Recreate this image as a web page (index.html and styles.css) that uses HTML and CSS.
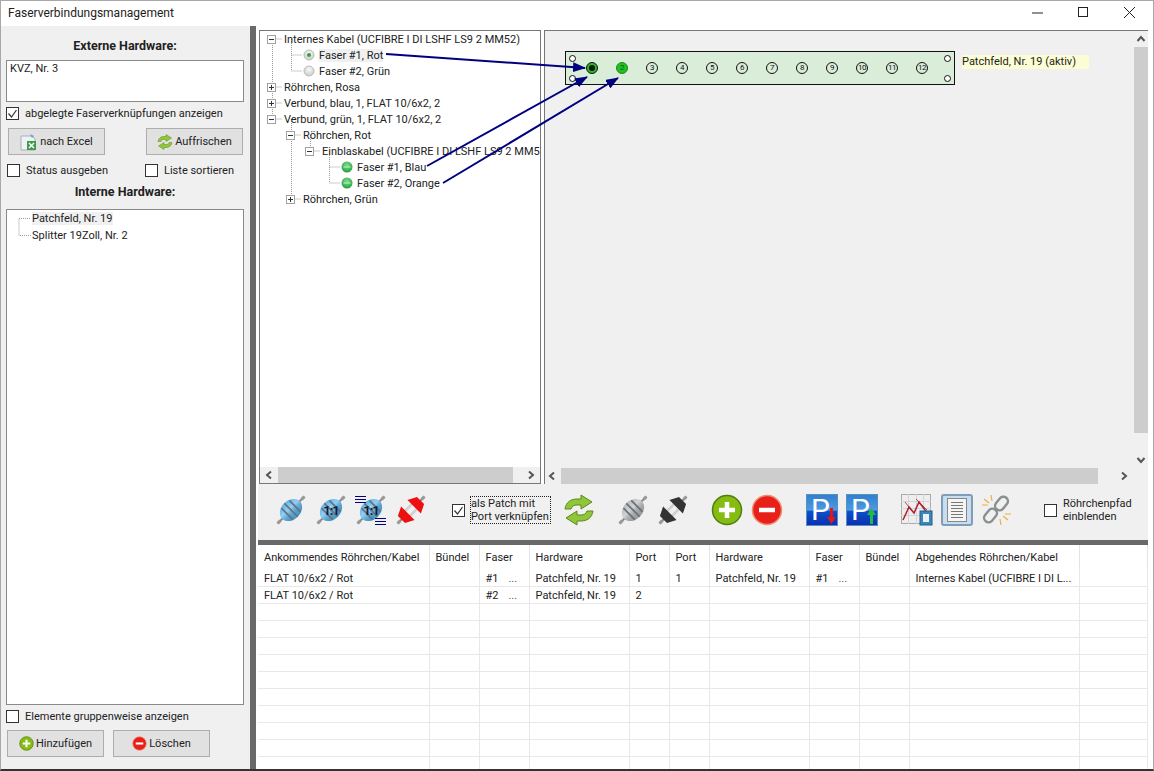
FILE: index.html
```html
<!DOCTYPE html>
<!-- Faserverbindungsmanagement window: hardware list on the left, fibre tree and patch panel on the right, connection table below -->
<html lang="de">
  <head>
    <meta charset="utf-8" />
    <title>Faserverbindungsmanagement</title>
    <link rel="stylesheet" href="styles.css">
  </head>
  <body>
    <svg class="defs" width="0" height="0">
      <defs>
        <linearGradient id="shine" x1="0" y1="0" x2="1" y2="0">
          <stop offset="0" stop-color="#fff" stop-opacity=".1" />
          <stop offset=".4" stop-color="#fff" stop-opacity=".4" />
          <stop offset="1" stop-color="#000" stop-opacity=".12" />
        </linearGradient>
        <linearGradient id="pblue" x1="0" y1="0" x2="0" y2="1">
          <stop offset="0" stop-color="#2f7fd0" />
          <stop offset=".5" stop-color="#4f9ae0" />
          <stop offset=".55" stop-color="#0d4fc8" />
          <stop offset="1" stop-color="#0a2fb0" />
        </linearGradient>
        <radialGradient id="ledgreen" cx=".5" cy=".35" r=".7">
          <stop offset="0" stop-color="#7fdc8c" />
          <stop offset="1" stop-color="#1f9a3a" />
        </radialGradient>
        <radialGradient id="ledgrey" cx=".5" cy=".35" r=".7">
          <stop offset="0" stop-color="#fafafa" />
          <stop offset="1" stop-color="#c4c8c4" />
        </radialGradient>
        <symbol id="chevron-left" viewBox="0 0 10 10"><path d="M7 1.500L3 5l4 3.500" fill="none" stroke="#555" stroke-width="2" /></symbol>
        <symbol id="chevron-right" viewBox="0 0 10 10"><path d="M3 1.500L7 5l-4 3.500" fill="none" stroke="#555" stroke-width="2" /></symbol>
        <symbol id="chevron-up" viewBox="0 0 10 10"><path d="M1.500 7L5 3l3.500 4" fill="none" stroke="#555" stroke-width="2" /></symbol>
        <symbol id="chevron-down" viewBox="0 0 10 10"><path d="M1.500 3L5 7l3.500-4" fill="none" stroke="#555" stroke-width="2" /></symbol>
        <symbol id="tick" viewBox="0 0 13 13"><path d="M2.500 6.500l3 3.500 5-7" fill="none" stroke="#333" stroke-width="1.200" /></symbol>
        <symbol id="plug" viewBox="0 0 32 32">
          <g transform="rotate(45 16 16)">
            <path d="M16-3V35" stroke="#8a8a8a" stroke-width="2" />
            <path d="M14.500-3h3v4h-3zM14.500 31h3v4h-3z" fill="#999" />
            <path d="M6.500 15C6.500 9 11 3.500 16 3.500S25.500 9 25.500 15z" fill="currentColor" />
            <path d="M6.500 17C6.500 23 11 28.500 16 28.500S25.500 23 25.500 17z" fill="currentColor" />
            <path d="M6.500 15h19v2h-19z" fill="currentColor" />
            <ellipse cx="16" cy="16" rx="9.500" ry="12.500" fill="url(#shine)" />
            <path d="M8 10.500h16M6.500 16h19M8 21.500h16" stroke="#66727e" stroke-width="1.800" />
          </g>
        </symbol>
        <symbol id="plug-open" viewBox="0 0 32 32">
          <g transform="rotate(45 16 16)">
            <path d="M16-3V6M16 26V35" stroke="#8a8a8a" stroke-width="2" />
            <path d="M14.500-3h3v4h-3zM14.500 31h3v4h-3z" fill="#999" />
            <path d="M12.500 11V22M19.500 11V22" stroke="#d0d0d0" stroke-width="2.600" />
            <path d="M6.500 11.500L11 2.500h10l4.500 9z" fill="currentColor" />
            <path d="M6.500 20.500L11 29.500h10l4.500-9z" fill="currentColor" />
          </g>
        </symbol>
        <symbol id="refresh" viewBox="0 0 32 32">
          <path d="M2 15C3 8 8 5 14 5h4V1l11 7-11 7v-4h-4c-3 0-5 1-6 4z" fill="#8fc63a" stroke="#5c8a18" />
          <path d="M30 17C29 24 24 27 18 27h-4v4L3 24l11-7v4h4c3 0 5-1 6-4z" fill="#8fc63a" stroke="#5c8a18" />
        </symbol>
        <symbol id="add" viewBox="0 0 32 32">
          <circle cx="16" cy="16" r="14.500" fill="#86bc12" stroke="#4f7d10" stroke-width="1.500" />
          <path d="M16 8v16M8 16h16" stroke="#fff" stroke-width="4.500" />
        </symbol>
        <symbol id="remove" viewBox="0 0 32 32">
          <circle cx="16" cy="16" r="14.500" fill="#e8201a" stroke="#f08a70" stroke-width="1.500" />
          <path d="M8 16h16" stroke="#fff" stroke-width="4.500" />
        </symbol>
      </defs>
    </svg>

    <div class="window">
      <div class="titlebar">
        <span class="title">Faserverbindungsmanagement</span>
        <div class="caption-buttons">
          <svg width="46" height="24" viewBox="0 0 46 24"><path d="M18 12h11" stroke="#222" /></svg>
          <svg width="46" height="24" viewBox="0 0 46 24"><rect x="18.500" y="6.500" width="9" height="9" fill="none" stroke="#222" /></svg>
          <svg width="46" height="24" viewBox="0 0 46 24"><path d="M18 6l11 11M29 6L18 17" stroke="#222" fill="none" /></svg>
        </div>
      </div>

      <div class="content">
        <aside class="sidebar">
          <div class="heading">Externe Hardware:</div>
          <div class="box box-external">KVZ, Nr. 3</div>
          <label class="check check-first"><span class="tickbox"><svg width="13" height="13"><use href="#tick" /></svg></span>abgelegte Faserverknüpfungen anzeigen</label>
          <div class="button-row">
            <button class="btn">
              <svg width="18" height="18" viewBox="0 0 18 18">
                <path d="M1 3h11l3 3v11H1z" fill="#eef2f4" stroke="#a8b0b8" />
                <path d="M7 8h9v9H7z" fill="#3f9a4a" />
                <path d="M9 10l5 5M14 10l-5 5" stroke="#fff" stroke-width="1.500" />
                <path d="M10 1l4 2-2 2z" fill="#6a9ad0" />
              </svg>nach Excel
            </button>
            <button class="btn">
              <svg width="16" height="16"><use href="#refresh" /></svg>Auffrischen
            </button>
          </div>
          <div class="check-row">
            <label class="check"><span class="tickbox"></span>Status ausgeben</label>
            <label class="check"><span class="tickbox"></span>Liste sortieren</label>
          </div>
          <div class="heading heading-internal">Interne Hardware:</div>
          <div class="box box-internal">
            <svg class="dots" width="14" height="30" viewBox="0 0 14 30"><path d="M1 8.500h12M1 8.500V25.500h12" fill="none" stroke="#999" stroke-dasharray="1 1" /></svg>
            <div class="hw-item"><span class="selected">Patchfeld, Nr. 19</span></div>
            <div class="hw-item">Splitter 19Zoll, Nr. 2</div>
          </div>
          <label class="check check-group"><span class="tickbox"></span>Elemente gruppenweise anzeigen</label>
          <div class="button-row button-row-bottom">
            <button class="btn"><svg width="15" height="15"><use href="#add" /></svg>Hinzufügen</button>
            <button class="btn"><svg width="15" height="15"><use href="#remove" /></svg>Löschen</button>
          </div>
        </aside>

        <div class="vsplit"></div>

        <main class="main">
          <div class="upper">
            <div class="tree">
              <div class="tree-rows">
                <svg class="tree-lines" width="280" height="180" viewBox="260 31 280 180">
                  <g fill="none" stroke="#999" stroke-dasharray="1 1">
                    <path d="M272.500 39V119M272.500 39H282M272.500 87H282M272.500 103H282M272.500 119H282" />
                    <path d="M291.500 39V71M291.500 55H302M291.500 71H302" />
                    <path d="M291.500 119V199M291.500 135H301M291.500 199H301" />
                    <path d="M310.500 135V151M310.500 151H320" />
                    <path d="M329.500 151V183M329.500 167H340M329.500 183H340" />
                  </g>
                </svg>
                <div class="node lvl0"><span class="toggle toggle-open"></span>Internes Kabel (UCFIBRE I DI LSHF LS9 2 MM52)</div>
                <div class="node lvl1-leaf"><svg class="led" width="12" height="12"><circle cx="6" cy="6" r="5" fill="url(#ledgrey)" stroke="#b0c0b0" /><circle cx="6" cy="6" r="2" fill="#3a9a4a" /></svg><span class="selected">Faser #1, Rot</span></div>
                <div class="node lvl1-leaf"><svg class="led" width="12" height="12"><circle cx="6" cy="6" r="5" fill="url(#ledgrey)" stroke="#bbb" /></svg>Faser #2, Grün</div>
                <div class="node lvl0"><span class="toggle toggle-closed"></span>Röhrchen, Rosa</div>
                <div class="node lvl0"><span class="toggle toggle-closed"></span>Verbund, blau, 1, FLAT 10/6x2, 2</div>
                <div class="node lvl0"><span class="toggle toggle-open"></span>Verbund, grün, 1, FLAT 10/6x2, 2</div>
                <div class="node lvl1"><span class="toggle toggle-open"></span>Röhrchen, Rot</div>
                <div class="node lvl2"><span class="toggle toggle-open"></span>Einblaskabel (UCFIBRE I DI LSHF LS9 2 MM52)</div>
                <div class="node lvl3-leaf"><svg class="led" width="12" height="12"><circle cx="6" cy="6" r="5.500" fill="url(#ledgreen)" /><path d="M2.500 6h7" stroke="#c8f0c8" /></svg>Faser #1, Blau</div>
                <div class="node lvl3-leaf"><svg class="led" width="12" height="12"><circle cx="6" cy="6" r="5.500" fill="url(#ledgreen)" /><path d="M2.500 6h7" stroke="#c8f0c8" /></svg>Faser #2, Orange</div>
                <div class="node lvl1"><span class="toggle toggle-closed"></span>Röhrchen, Grün</div>
              </div>
              <div class="hscroll">
                <svg class="arrow" width="10" height="10"><use href="#chevron-left" /></svg>
                <div class="track"><div class="thumb thumb-tree"></div></div>
                <svg class="arrow" width="10" height="10"><use href="#chevron-right" /></svg>
              </div>
            </div>

            <div class="canvas">
              <div class="canvas-view">
                <div class="canvas-stage">
                  <div class="patchfeld">
                    <div class="holes"><i></i><i></i></div>
                    <div class="ports">
                      <span class="port port-active"><b></b></span>
                      <span class="port port-used">2</span>
                      <span class="port">3</span>
                      <span class="port">4</span>
                      <span class="port">5</span>
                      <span class="port">6</span>
                      <span class="port">7</span>
                      <span class="port">8</span>
                      <span class="port">9</span>
                      <span class="port">10</span>
                      <span class="port">11</span>
                      <span class="port">12</span>
                    </div>
                    <div class="holes"><i></i><i></i></div>
                  </div>
                  <div class="patch-label">Patchfeld, Nr. 19 (aktiv)</div>
                </div>
                <div class="vscroll">
                  <svg class="arrow" width="10" height="10"><use href="#chevron-up" /></svg>
                  <div class="vtrack"><div class="vthumb"></div></div>
                  <svg class="arrow" width="10" height="10"><use href="#chevron-down" /></svg>
                </div>
              </div>
              <div class="hscroll hscroll-canvas">
                <svg class="arrow" width="10" height="10"><use href="#chevron-left" /></svg>
                <div class="track"><div class="thumb thumb-canvas"></div></div>
                <svg class="arrow" width="10" height="10"><use href="#chevron-right" /></svg>
              </div>
            </div>

            <!-- connection arrows run over both the tree and the canvas -->
            <svg class="links" width="300" height="170" viewBox="370 40 300 170">
              <defs>
                <marker id="head" markerUnits="userSpaceOnUse" markerWidth="13" markerHeight="10" refX="12" refY="5" orient="auto">
                  <path d="M0 0L13 5 0 10z" fill="#000080" />
                </marker>
              </defs>
              <g stroke="#000080" stroke-width="2" fill="none">
                <path d="M386 54L585 68" marker-end="url(#head)" />
                <path d="M427 166L587 77" marker-end="url(#head)" />
                <path d="M443 183L618 78" marker-end="url(#head)" />
              </g>
            </svg>
          </div>

          <div class="toolbar">
            <span class="tool tool-first" style="color:#4aaeea"><svg width="32" height="32"><use href="#plug" /></svg></span>
            <span class="tool" style="color:#4aaeea"><svg width="32" height="32"><use href="#plug" /><text class="one-one" x="16" y="21">1:1</text></svg></span>
            <span class="tool" style="color:#4aaeea"><svg width="32" height="32"><use href="#plug" /><text class="one-one" x="16" y="21">1:1</text><path d="M0 2.500h11M0 5.500h11M0 8.500h11M20 24.500h11M20 27.500h11M20 30.500h11" stroke="#000080" /></svg></span>
            <span class="tool" style="color:#ee1010"><svg width="32" height="32"><use href="#plug-open" /></svg></span>
            <label class="check check-patch"><span class="tickbox"><svg width="13" height="13"><use href="#tick" /></svg></span><span class="focus-label">als Patch mit<br />Port verknüpfen</span></label>
            <span class="tool tool-refresh"><svg width="32" height="32"><use href="#refresh" /></svg></span>
            <span class="tool tool-gap" style="color:#b4b4b4"><svg width="32" height="32"><use href="#plug" /></svg></span>
            <span class="tool" style="color:#333"><svg width="32" height="32"><use href="#plug-open" /></svg></span>
            <span class="tool tool-gap"><svg width="32" height="32"><use href="#add" /></svg></span>
            <span class="tool"><svg width="32" height="32"><use href="#remove" /></svg></span>
            <span class="tool tool-gap tool-p">
              <svg width="32" height="32" viewBox="0 0 32 32">
                <rect x=".5" y=".5" width="31" height="31" fill="url(#pblue)" stroke="#5a8fc0" />
                <text class="p-letter" x="5" y="26">P</text>
                <path d="M24 14h3v9h3l-4.500 7-4.500-7h3z" fill="#e01818" />
              </svg>
            </span>
            <span class="tool">
              <svg width="32" height="32" viewBox="0 0 32 32">
                <rect x=".5" y=".5" width="31" height="31" fill="url(#pblue)" stroke="#5a8fc0" />
                <text class="p-letter" x="5" y="26">P</text>
                <path d="M24 30h3v-9h3l-4.500-7-4.500 7h3z" fill="#22b84a" />
              </svg>
            </span>
            <span class="tool tool-gap tool-chart">
              <svg width="32" height="32" viewBox="0 0 32 32">
                <rect x=".5" y=".5" width="29" height="29" fill="#eee" stroke="#aaa" />
                <path d="M0 7.500h30M0 14.500h30M0 21.500h30M7.500 0v30M15.500 0v30M22.500 0v30" stroke="#d4d4d4" />
                <path d="M2 26L8 13l5 6 5-11 6 8 5 6" fill="none" stroke="#b02030" stroke-width="1.500" />
                <path d="M4 8l7 9M15 5l11 11" fill="none" stroke="#b02030" stroke-width=".8" />
                <rect x="19" y="17" width="12" height="14" fill="#3f86b8" stroke="#1f5f8f" />
                <rect x="22" y="20" width="6" height="8" fill="#e8f0f8" />
              </svg>
            </span>
            <span class="tool tool-doc">
              <svg width="20" height="24" viewBox="0 0 20 24">
                <rect x=".5" y=".5" width="19" height="23" fill="#f4f4f4" stroke="#888" />
                <path d="M4 4.500h12M4 7.500h12M4 10.500h12M4 13.500h12M4 16.500h12M4 19.500h12" stroke="#777" />
              </svg>
            </span>
            <span class="tool">
              <svg width="32" height="32" viewBox="0 0 32 32">
                <g fill="none" stroke="#8a8f8f" stroke-width="2.400">
                  <rect x="16" y="2" width="9" height="15" rx="4.500" transform="rotate(40 20.500 9.500)" />
                  <rect x="5" y="14" width="9" height="15" rx="4.500" transform="rotate(40 9.500 21.500)" />
                </g>
                <path d="M3 5l5 4M1 11h6M10 1l1 6M22 22l5 4M24 20h6M19 25l1 6" stroke="#e8b040" stroke-width="1.200" />
              </svg>
            </span>
            <label class="check check-path"><span class="tickbox"></span><span>Röhrchenpfad<br />einblenden</span></label>
          </div>

          <div class="hsplit"></div>

          <div class="grid">
            <table>
              <colgroup>
                <col class="c-cable" /><col class="c-small" /><col class="c-small" /><col class="c-hw" /><col class="c-port" /><col class="c-port" /><col class="c-hw" /><col class="c-small" /><col class="c-small" /><col class="c-cable-out" /><col />
              </colgroup>
              <thead>
                <tr>
                  <th>Ankommendes Röhrchen/Kabel</th><th>Bündel</th><th>Faser</th><th>Hardware</th><th>Port</th><th>Port</th><th>Hardware</th><th>Faser</th><th>Bündel</th><th>Abgehendes Röhrchen/Kabel</th><th></th>
                </tr>
              </thead>
              <tbody>
                <tr><td>FLAT 10/6x2 / Rot</td><td></td><td>#1<span class="more">...</span></td><td>Patchfeld, Nr. 19</td><td>1</td><td>1</td><td>Patchfeld, Nr. 19</td><td>#1<span class="more">...</span></td><td></td><td>Internes Kabel (UCFIBRE I DI L...</td><td></td></tr>
                <tr><td>FLAT 10/6x2 / Rot</td><td></td><td>#2<span class="more">...</span></td><td>Patchfeld, Nr. 19</td><td>2</td><td></td><td></td><td></td><td></td><td></td><td></td></tr>
                <tr><td></td><td></td><td></td><td></td><td></td><td></td><td></td><td></td><td></td><td></td><td></td></tr>
                <tr><td></td><td></td><td></td><td></td><td></td><td></td><td></td><td></td><td></td><td></td><td></td></tr>
                <tr><td></td><td></td><td></td><td></td><td></td><td></td><td></td><td></td><td></td><td></td><td></td></tr>
                <tr><td></td><td></td><td></td><td></td><td></td><td></td><td></td><td></td><td></td><td></td><td></td></tr>
                <tr><td></td><td></td><td></td><td></td><td></td><td></td><td></td><td></td><td></td><td></td><td></td></tr>
                <tr><td></td><td></td><td></td><td></td><td></td><td></td><td></td><td></td><td></td><td></td><td></td></tr>
                <tr><td></td><td></td><td></td><td></td><td></td><td></td><td></td><td></td><td></td><td></td><td></td></tr>
                <tr><td></td><td></td><td></td><td></td><td></td><td></td><td></td><td></td><td></td><td></td><td></td></tr>
                <tr><td></td><td></td><td></td><td></td><td></td><td></td><td></td><td></td><td></td><td></td><td></td></tr>
                <tr><td></td><td></td><td></td><td></td><td></td><td></td><td></td><td></td><td></td><td></td><td></td></tr>
              </tbody>
            </table>
          </div>
        </main>
      </div>
    </div>
  </body>
</html>
```

FILE: styles.css
```css
html,
body {
  margin: 0;
  height: 100%;
  overflow: hidden;
  background: #fff;
}

body {
  font-family: Roboto, "Open Sans", sans-serif;
  font-size: 11px;
  color: #222;
}

.defs {
  position: absolute;
}

.window {
  box-sizing: border-box;
  display: flex;
  flex-direction: column;
  width: 1154px;
  height: 771px;
  border-top: 1px solid #a8a8a8;
  border-left: 1px solid #a8a8a8;
  border-right: 1px solid #a8a8a8;
  border-bottom: 2px solid #333;
}

/* title bar */
.titlebar {
  display: flex;
  align-items: center;
  justify-content: space-between;
  height: 25px;
  flex: none;
  padding: 0 1px 2px 7px;
  box-sizing: border-box;
}

.title {
  font-size: 12px;
}

.caption-buttons {
  display: flex;
}

.content {
  display: flex;
  flex: 1;
  min-height: 0;
}

/* left column */
.sidebar {
  display: flex;
  flex-direction: column;
  box-sizing: border-box;
  width: 249px;
  flex: none;
  padding: 0 6px 12px 5px;
  background: #f0f0f0;
}

.heading {
  margin-top: 12px;
  height: 16px;
  line-height: 16px;
  text-align: center;
  font-weight: 700;
  font-size: 12.5px;
}

.heading-internal {
  margin-top: 6px;
}

.box {
  box-sizing: border-box;
  border: 1px solid #8a8a8a;
  background: #fff;
}

.box-external {
  height: 42px;
  margin-top: 6px;
  padding: 1px 3px;
}

.box-internal {
  position: relative;
  flex: 1;
  margin-top: 9px;
}

.dots {
  position: absolute;
  left: 11px;
  top: 0;
}

.hw-item {
  height: 17px;
  line-height: 17px;
  padding-left: 25px;
}

.selected {
  background: #f0f0f0;
}

.check {
  display: flex;
  align-items: center;
  white-space: nowrap;
}

.tickbox {
  box-sizing: border-box;
  display: block;
  flex: none;
  width: 13px;
  height: 13px;
  margin-right: 6px;
  border: 1px solid #333;
  background: #fff;
}

.tickbox svg {
  display: block;
  margin: -1px;
}

.check-first {
  margin-top: 4px;
  height: 15px;
}

.button-row {
  display: flex;
  justify-content: space-between;
  margin: 7px 1px 0 2px;
}

.btn {
  display: flex;
  align-items: center;
  justify-content: center;
  gap: 2px;
  box-sizing: border-box;
  width: 97px;
  height: 27px;
  padding: 0;
  border: 1px solid #adadad;
  background: #e1e1e1;
  font: inherit;
  color: inherit;
}

.check-row {
  display: grid;
  grid-template-columns: 138px 1fr;
  margin: 8px 0 0 1px;
  height: 15px;
}

.check-group {
  margin-top: 4px;
  height: 15px;
}

.button-row-bottom {
  justify-content: flex-start;
  gap: 9px;
  margin: 6px 0 0 1px;
}

.vsplit {
  width: 6px;
  flex: none;
  background: #696969;
}

/* right side */
.main {
  display: flex;
  flex-direction: column;
  flex: 1;
  min-width: 0;
  padding-left: 2px;
}

.upper {
  position: relative;
  display: flex;
  gap: 3px;
  height: 458px;
  flex: none;
  padding: 4px 5px 0 1px;
  box-sizing: border-box;
}

.tree {
  box-sizing: border-box;
  display: flex;
  flex-direction: column;
  width: 282px;
  flex: none;
  border: 1px solid #777;
  background: #fff;
}

.tree-rows {
  position: relative;
  flex: 1;
  overflow: hidden;
}

.tree-lines {
  position: absolute;
  left: 0;
  top: 0;
}

.node {
  position: relative;
  display: flex;
  align-items: center;
  height: 16px;
  white-space: nowrap;
}

.lvl0 {
  padding-left: 7px;
}

.lvl1 {
  padding-left: 26px;
}

.lvl2 {
  padding-left: 45px;
}

.lvl1-leaf {
  padding-left: 43px;
}

.lvl3-leaf {
  padding-left: 81px;
}

.toggle {
  box-sizing: border-box;
  flex: none;
  width: 9px;
  height: 9px;
  margin-right: 8px;
  border: 1px solid #a0a0a0;
  background-color: #fff;
  background-repeat: no-repeat;
}

.toggle-open {
  background-image: linear-gradient(#333, #333);
  background-size: 5px 1px;
  background-position: 1px 3px;
}

.toggle-closed {
  background-image: linear-gradient(#333, #333), linear-gradient(#333, #333);
  background-size: 5px 1px, 1px 5px;
  background-position: 1px 3px, 3px 1px;
}

.led {
  flex: none;
  margin-right: 4px;
}

.hscroll {
  display: flex;
  align-items: center;
  height: 16px;
  flex: none;
  background: #f0f0f0;
}

.arrow {
  flex: none;
  margin: 0 4px;
}

.track {
  flex: 1;
  height: 100%;
}

.thumb {
  height: 100%;
  background: #cdcdcd;
}

.thumb-tree {
  width: 235px;
}

.thumb-canvas {
  width: 537px;
}

.canvas {
  display: flex;
  flex-direction: column;
  flex: 1;
  min-width: 0;
  border-top: 1px solid #777;
  border-left: 1px solid #777;
  background: #f0f0f0;
}

.canvas-view {
  display: flex;
  flex: 1;
  min-height: 0;
}

.canvas-stage {
  display: flex;
  align-items: flex-start;
  flex: 1;
  padding: 20px 0 0 20px;
}

.patchfeld {
  box-sizing: border-box;
  display: flex;
  justify-content: space-between;
  width: 390px;
  height: 34px;
  flex: none;
  padding: 0 3px;
  border: 1px solid #111;
  background: #d9edd9;
}

.holes {
  display: flex;
  flex-direction: column;
  justify-content: space-between;
  padding: 3px 0 2px;
}

.holes i {
  display: block;
  box-sizing: border-box;
  width: 7px;
  height: 7px;
  border: 1px solid #111;
  border-radius: 50%;
  background: #fff;
}

.ports {
  display: flex;
  align-items: center;
  gap: 18px;
  margin-left: 9px;
  margin-right: 15px;
}

.port {
  box-sizing: border-box;
  display: flex;
  align-items: center;
  justify-content: center;
  width: 12px;
  height: 12px;
  border: 1px solid #111;
  border-radius: 50%;
  font-size: 8px;
  letter-spacing: -0.5px;
  line-height: 1;
  color: #111;
}

.port-active {
  background: #22c022;
}

.port-active b {
  display: block;
  width: 6px;
  height: 6px;
  border-radius: 50%;
  background: #111;
}

.port-used {
  border-color: #1a8a1a;
  background: #22c022;
  color: #0b5c0b;
}

.patch-label {
  box-sizing: border-box;
  width: 127px;
  height: 14px;
  line-height: 14px;
  margin: 4px 0 0 7px;
  background: #fdfdd5;
  white-space: nowrap;
}

.vscroll {
  display: flex;
  flex-direction: column;
  align-items: center;
  width: 14px;
  flex: none;
}

.vscroll .arrow {
  margin: 3px 0;
}

.vtrack {
  flex: 1;
  width: 100%;
}

.vthumb {
  width: 100%;
  height: 386px;
  background: #cdcdcd;
}

.hscroll-canvas {
  padding-right: 15px;
}

.hscroll-canvas .arrow:first-child {
  margin: 0 4px 0 2px;
}

.links {
  position: absolute;
  left: 112px;
  top: 14px;
  pointer-events: none;
}

/* toolbar */
.toolbar {
  display: flex;
  align-items: center;
  box-sizing: border-box;
  height: 56px;
  flex: none;
  padding: 0 0 4px 17px;
  margin-right: 5px;
  background: #f0f0f0;
}

.tool {
  display: block;
  width: 32px;
  height: 32px;
  flex: none;
  margin-left: 8px;
}

.tool svg {
  display: block;
  overflow: visible;
}

.tool-first {
  margin-left: 0;
}

.one-one {
  font-size: 13px;
  font-weight: 700;
  text-anchor: middle;
  letter-spacing: -1px;
  fill: #10203a;
}

.p-letter {
  font-size: 30px;
  fill: #fff;
}

.check-patch {
  width: 96px;
  flex: none;
  margin-left: 25px;
}

.focus-label {
  display: block;
  margin-left: -1px;
  padding-right: 1px;
  border: 1px dotted #222;
  line-height: 13px;
}

.tool-refresh {
  margin-left: 15px;
}

.tool-gap {
  margin-left: 22px;
}

.tool-p {
  margin-left: 23px;
}

.tool-chart {
  margin-left: 23px;
}

.tool-doc {
  box-sizing: border-box;
  display: flex;
  align-items: center;
  justify-content: center;
  border: 2px solid #7f9db9;
  border-radius: 3px;
  background: #c9ddf0;
}

.check-path {
  margin-left: 31px;
  line-height: 13px;
}

.hsplit {
  height: 5px;
  flex: none;
  margin-right: 5px;
  background: #696969;
}

/* connection table */
.grid {
  flex: 1;
  min-height: 0;
  overflow: hidden;
  margin-right: 5px;
  background: #fff;
}

.grid table {
  width: 890px;
  table-layout: fixed;
  border-collapse: collapse;
}

.c-cable {
  width: 171px;
}

.c-small {
  width: 50px;
}

.c-hw {
  width: 100px;
}

.c-port {
  width: 40px;
}

.c-cable-out {
  width: 170px;
}

.grid th {
  height: 25px;
  padding: 0 0 0 6px;
  box-sizing: border-box;
  border-right: 1px solid #e4e4e4;
  font-weight: 400;
  text-align: left;
  white-space: nowrap;
  overflow: hidden;
}

.grid td {
  height: 16px;
  padding: 0 0 0 6px;
  border-right: 1px solid #e8e8e8;
  border-bottom: 1px solid #e8e8e8;
  white-space: nowrap;
  overflow: hidden;
}

.more {
  margin-left: 10px;
  color: #555;
}
```
